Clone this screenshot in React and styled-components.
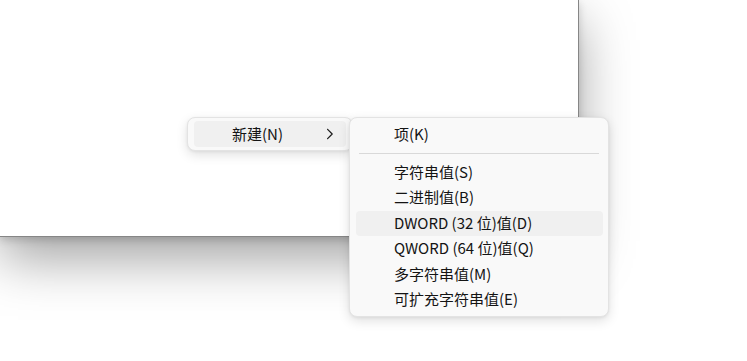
import React from "react";
import styled, { createGlobalStyle } from "styled-components";

const Global = createGlobalStyle`
  html, body { margin: 0; padding: 0; background: #ffffff; }
  body { width: 747px; height: 361px; overflow: hidden; position: relative;
    font-family: "Noto Sans CJK SC", "Noto Sans", sans-serif; }
`;

const Stage = styled.div`
  position: relative;
  width: 747px;
  height: 361px;
  overflow: hidden;
  background: #ffffff;
`;

const Window = styled.div`
  width: 578px;
  height: 236px;
  background: #ffffff;
  border-right: 1px solid #868686;
  border-bottom: 1px solid #868686;
  box-shadow: 0 22px 50px rgba(0, 0, 0, 0.36), 0 3px 8px rgba(0, 0, 0, 0.16);
`;

const Menu = styled.div`
  position: absolute;
  left: ${(p) => p.$left}px;
  top: ${(p) => p.$top}px;
  width: ${(p) => p.$width}px;
  box-sizing: border-box;
  padding: 3px 0;
  background: #f9f9f9;
  border: 1px solid #e3e3e3;
  border-radius: 8px;
  box-shadow: 0 4px 12px rgba(0, 0, 0, 0.12), 0 1px 3px rgba(0, 0, 0, 0.06);
  display: flex;
  flex-direction: column;
`;

const Item = styled.div`
  height: ${(p) => p.$h || 25.5}px;
  box-sizing: border-box;
  margin: 0 ${(p) => p.$mr || 5}px 0 ${(p) => p.$ml || 6}px;
  padding: 0 12px 2px 38px;
  border-radius: 4px;
  background: ${(p) => (p.$active ? "#f0f0f0" : "transparent")};
  display: flex;
  align-items: center;
  justify-content: space-between;
  font-size: 15px;
  color: #141414;
  white-space: nowrap;
  line-height: 1;
`;

const Separator = styled.div`
  height: 1px;
  background: #d9d9d9;
  margin: 5.5px 9px 6px 9px;
`;

const Chevron = () => (
  <svg width="8" height="12" viewBox="0 0 8 12" fill="none" style={{ marginTop: 2 }}>
    <path d="M1.6 1.3 L6.2 6 L1.6 10.7" stroke="#1b1b1b" strokeWidth="1.2" strokeLinecap="round" strokeLinejoin="round" />
  </svg>
);

const subItems = [
  "字符串值(S)",
  "二进制值(B)",
  "DWORD (32 位)值(D)",
  "QWORD (64 位)值(Q)",
  "多字符串值(M)",
  "可扩充字符串值(E)",
];

export default function App() {
  return (
    <Stage>
      <Global />
      <Window />
      <Menu $left={187} $top={117} $width={166}>
        <Item $active $h={26} $ml={6} $mr={6}>
          <span>新建(N)</span>
          <Chevron />
        </Item>
      </Menu>
      <Menu $left={349} $top={117} $width={260}>
        <Item $h={26}>项(K)</Item>
        <Separator />
        {subItems.map((t, i) => (
          <Item key={t} $active={i === 2}>
            {t}
          </Item>
        ))}
      </Menu>
    </Stage>
  );
}
